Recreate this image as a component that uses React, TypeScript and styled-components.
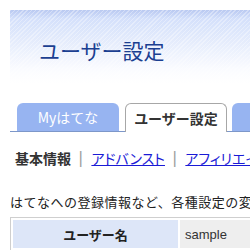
import React from 'react'
import styled, { createGlobalStyle } from 'styled-components'

const GlobalStyle = createGlobalStyle`
  body {
    margin: 0;
    background: #fff;
    font-family: "Noto Sans CJK JP", "DejaVu Sans", sans-serif;
    color: #222;
    overflow: hidden;
  }
`

const Page = styled.div`
  width: 250px;
  height: 250px;
  overflow: hidden;
  padding: 10px 0 0 10px;
  box-sizing: border-box;
`

const Header = styled.div`
  height: 73px;
  box-sizing: border-box;
  display: flex;
  align-items: center;
  padding: 8px 0 0 29px;
  background:
    repeating-linear-gradient(135deg, rgba(255, 255, 255, 0.35) 0 1px, transparent 1px 3px),
    linear-gradient(180deg, #b9c9f1 0%, #d4e0fb 12%, #e6edfc 45%, #fafbff 80%, #ffffff 100%);
`

const Title = styled.h1`
  margin: 0;
  font-size: 21px;
  font-weight: normal;
  color: #1b3f91;
  line-height: 1;
`

const TabBar = styled.div`
  margin-top: 19px;
  display: flex;
  align-items: flex-end;
  gap: 5px;
  padding-left: 7px;
  border-bottom: 1px solid #7d97c9;
  height: 29px;
`

const Tab = styled.div<{ $active?: boolean; $width: number }>`
  flex: 0 0 auto;
  width: ${({ $width }) => $width}px;
  height: ${({ $active }) => ($active ? '29px' : '28px')};
  box-sizing: border-box;
  display: flex;
  align-items: center;
  justify-content: center;
  border-radius: 6px 6px 0 0;
  font-size: 14px;
  white-space: nowrap;
  margin-bottom: ${({ $active }) => ($active ? '-1px' : '0')};
  background: ${({ $active }) => ($active ? '#ffffff' : '#97b4f1')};
  color: ${({ $active }) => ($active ? '#333' : '#ffffff')};
  font-weight: ${({ $active }) => ($active ? 'bold' : 'normal')};
  border: ${({ $active }) => ($active ? '1px solid #a7a7a7' : 'none')};
  border-bottom: none;
  margin-left: ${({ $active }) => ($active ? '1px' : '0')};
`

const SubNav = styled.div`
  margin-top: 16px;
  padding-left: 5px;
  display: flex;
  align-items: center;
  font-size: 14px;
  line-height: 20px;
  white-space: nowrap;
`

const Current = styled.span`
  font-weight: bold;
  color: #333;
`

const Sep = styled.span`
  color: #a0a0a0;
  margin: 0 8px 0 7px;
  font-family: "DejaVu Sans", sans-serif;
  font-size: 16px;
`

const NavLink = styled.a`
  color: #1a1ad6;
  text-decoration: underline;
  font-feature-settings: "palt";
  cursor: pointer;
`

const Lead = styled.p`
  margin: 25px 0 0 0;
  font-size: 13px;
  letter-spacing: 0.5px;
  line-height: 18px;
  white-space: nowrap;
  color: #222;
`

const Table = styled.table`
  margin-top: 6px;
  border: 1px solid #cfcfcf;
  border-spacing: 2px;
  width: 260px;
`

const Th = styled.th`
  width: 165px;
  height: 28px;
  padding: 0;
  background: #dde6f8;
  font-size: 13px;
  font-weight: bold;
  color: #222;
  text-align: center;
`

const Td = styled.td`
  background: #eeeeee;
  padding: 0 5px;
  font-family: "Liberation Sans", Arial, sans-serif;
  font-size: 13px;
  color: #333;
`

export default function App() {
  return (
    <>
      <GlobalStyle />
      <Page>
        <Header>
          <Title>ユーザー設定</Title>
        </Header>
        <TabBar>
          <Tab $width={102}>Myはてな</Tab>
          <Tab $active $width={102}>ユーザー設定</Tab>
          <Tab $width={150}>アカウント</Tab>
        </TabBar>
        <SubNav>
          <Current>基本情報</Current>
          <Sep>|</Sep>
          <NavLink>アドバンスト</NavLink>
          <Sep>|</Sep>
          <NavLink>アフィリエイト</NavLink>
        </SubNav>
        <Lead>はてなへの登録情報など、各種設定の変更ができます。</Lead>
        <Table>
          <tbody>
            <tr>
              <Th>ユーザー名</Th>
              <Td>sample</Td>
            </tr>
          </tbody>
        </Table>
      </Page>
    </>
  )
}
